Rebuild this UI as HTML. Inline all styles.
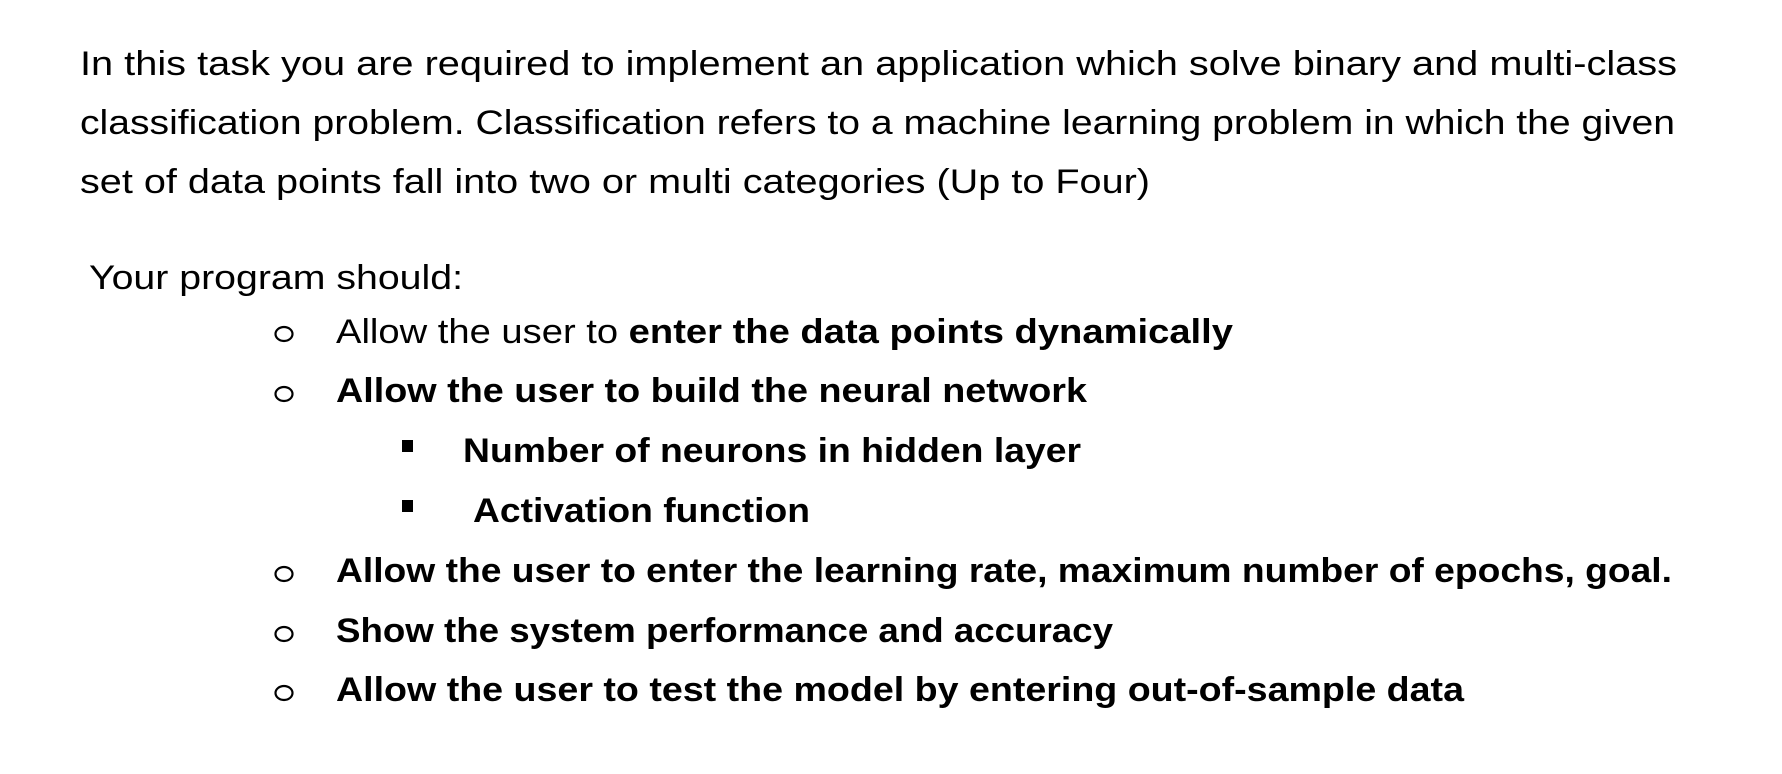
<!DOCTYPE html>
<html><head><meta charset="utf-8"><style>
html,body{margin:0;padding:0;background:#fff;}
svg{display:block;}
text{font-family:"Liberation Sans",sans-serif;font-size:34px;fill:#000;}
.b{font-weight:bold;}
</style></head><body>
<svg width="1782" height="774" viewBox="0 0 1782 774">
<text x="80" y="75" textLength="1597" lengthAdjust="spacingAndGlyphs">In this task you are required to implement an application which solve binary and multi-class</text>
<text x="80" y="134" textLength="1595" lengthAdjust="spacingAndGlyphs">classification problem. Classification refers to a machine learning problem in which the given</text>
<text x="80" y="193" textLength="1070" lengthAdjust="spacingAndGlyphs">set of data points fall into two or multi categories (Up to Four)</text>
<text x="89" y="289" textLength="374" lengthAdjust="spacingAndGlyphs">Your program should:</text>

<ellipse cx="284" cy="334" rx="8.5" ry="7" fill="none" stroke="#000" stroke-width="2.2"/>
<text x="336" y="343" textLength="897" lengthAdjust="spacingAndGlyphs">Allow the user to <tspan class="b">enter the data points dynamically</tspan></text>

<ellipse cx="284" cy="394" rx="8.5" ry="7" fill="none" stroke="#000" stroke-width="2.2"/>
<text class="b" x="336" y="402" textLength="751" lengthAdjust="spacingAndGlyphs">Allow the user to build the neural network</text>

<rect x="402" y="440" width="11" height="12" fill="#000"/>
<text class="b" x="463" y="462" textLength="618" lengthAdjust="spacingAndGlyphs">Number of neurons in hidden layer</text>

<rect x="402" y="500" width="11" height="12" fill="#000"/>
<text class="b" x="473" y="522" textLength="337" lengthAdjust="spacingAndGlyphs">Activation function</text>

<ellipse cx="284" cy="574" rx="8.5" ry="7" fill="none" stroke="#000" stroke-width="2.2"/>
<text class="b" x="336" y="582" textLength="1336" lengthAdjust="spacingAndGlyphs">Allow the user to enter the learning rate, maximum number of epochs, goal.</text>

<ellipse cx="284" cy="634" rx="8.5" ry="7" fill="none" stroke="#000" stroke-width="2.2"/>
<text class="b" x="336" y="642" textLength="777" lengthAdjust="spacingAndGlyphs">Show the system performance and accuracy</text>

<ellipse cx="284" cy="693" rx="8.5" ry="7" fill="none" stroke="#000" stroke-width="2.2"/>
<text class="b" x="336" y="701" textLength="1128" lengthAdjust="spacingAndGlyphs">Allow the user to test the model by entering out-of-sample data</text>
</svg>
</body></html>
